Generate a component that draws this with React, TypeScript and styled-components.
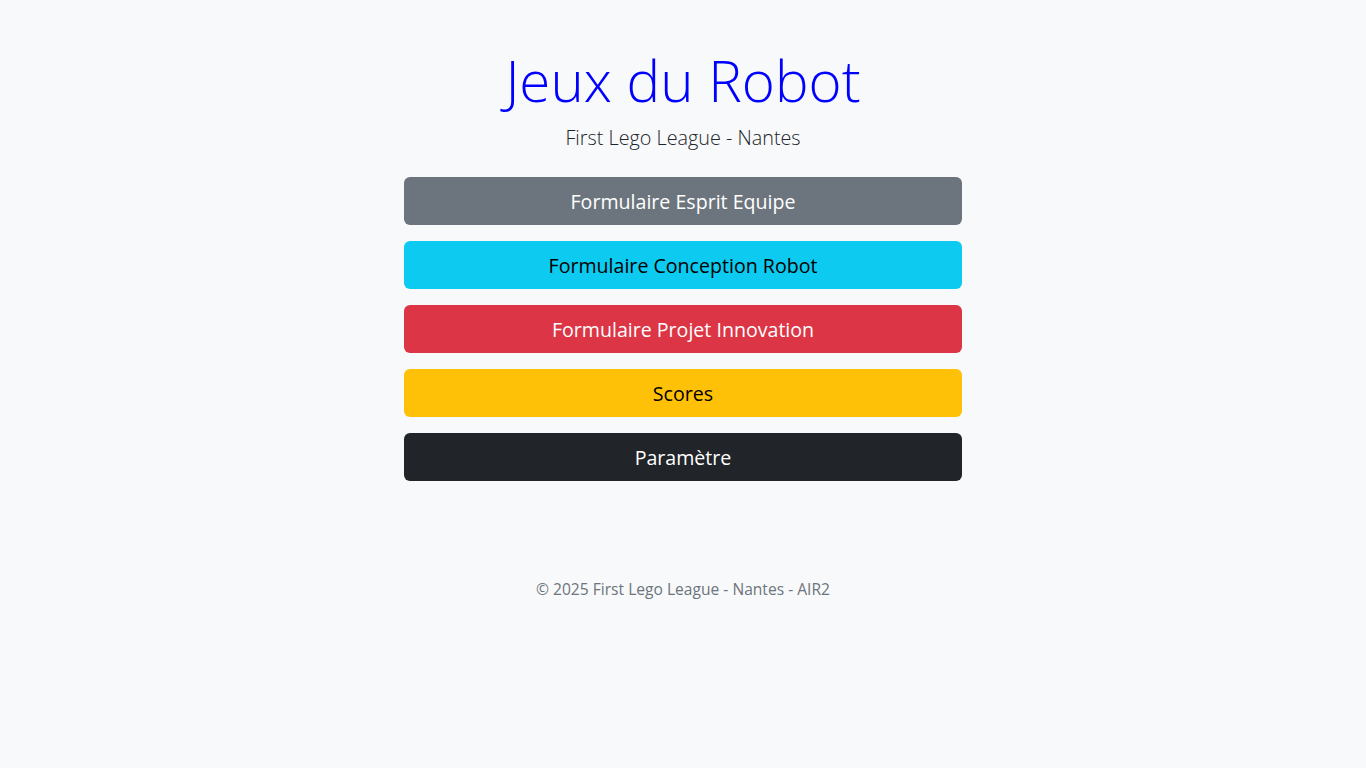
import React from "react";
import styled, { createGlobalStyle } from "styled-components";

const GlobalStyle = createGlobalStyle`
  html, body {
    margin: 0;
    padding: 0;
    background: #f8f9fa;
  }
  body {
    font-family: "Open Sans", "Noto Sans", sans-serif;
    color: #212529;
  }
`;

const Page = styled.div`
  min-height: 768px;
  display: flex;
  flex-direction: column;
  align-items: center;
  padding-top: 47px;
  box-sizing: border-box;
`;

const Title = styled.h1`
  margin: 0;
  font-size: 56.5px;
  font-weight: 300;
  line-height: 1.2;
  color: #0000ff;
`;

const Subtitle = styled.p`
  margin: 8px 0 0;
  font-size: 19.8px;
  font-weight: 300;
  line-height: 1.5;
  color: #212529;
`;

const Menu = styled.nav`
  margin-top: 25px;
  width: 558px;
  display: flex;
  flex-direction: column;
  gap: 16px;
`;

type Variant = "secondary" | "info" | "danger" | "warning" | "dark";

const palette: Record<Variant, { bg: string; fg: string }> = {
  secondary: { bg: "#6c757d", fg: "#ffffff" },
  info: { bg: "#0dcaf0", fg: "#000000" },
  danger: { bg: "#dc3545", fg: "#ffffff" },
  warning: { bg: "#ffc107", fg: "#000000" },
  dark: { bg: "#212529", fg: "#ffffff" },
};

const MenuButton = styled.a<{ $variant: Variant }>`
  display: flex;
  align-items: center;
  justify-content: center;
  height: 48px;
  box-sizing: border-box;
  border-radius: 6px;
  font-size: 19.6px;
  font-weight: 400;
  text-decoration: none;
  background: ${(p) => palette[p.$variant].bg};
  color: ${(p) => palette[p.$variant].fg};
  cursor: pointer;
`;

const Footer = styled.footer`
  margin-top: 97px;
  font-size: 15.6px;
  line-height: 1.5;
  color: #6c757d;
`;

const items: { label: string; variant: Variant }[] = [
  { label: "Formulaire Esprit Equipe", variant: "secondary" },
  { label: "Formulaire Conception Robot", variant: "info" },
  { label: "Formulaire Projet Innovation", variant: "danger" },
  { label: "Scores", variant: "warning" },
  { label: "Paramètre", variant: "dark" },
];

export default function App() {
  return (
    <>
      <GlobalStyle />
      <Page>
        <Title>Jeux du Robot</Title>
        <Subtitle>First Lego League - Nantes</Subtitle>
        <Menu>
          {items.map((it) => (
            <MenuButton key={it.label} $variant={it.variant}>
              {it.label}
            </MenuButton>
          ))}
        </Menu>
        <Footer>© 2025 First Lego League - Nantes - AIR2</Footer>
      </Page>
    </>
  );
}
